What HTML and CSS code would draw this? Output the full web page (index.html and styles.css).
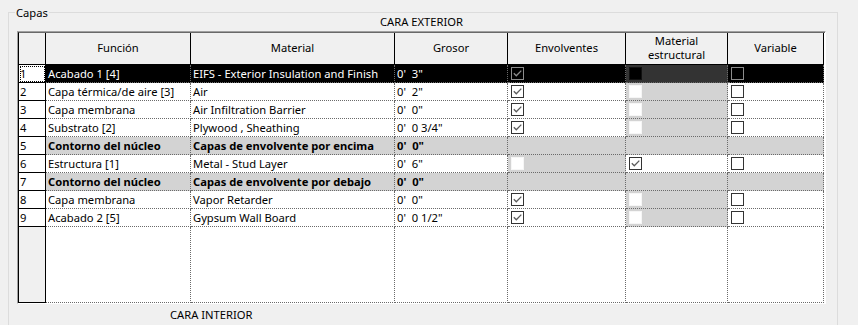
FILE: index.html
```html
<!DOCTYPE html>
<html lang="es">
<head>
<meta charset="utf-8">
<title>Capas</title>
<link rel="stylesheet" href="styles.css">
</head>
<body>
<div class="group">
  <span class="legend">Capas</span>
  <div class="caption cap-top">CARA EXTERIOR</div>
  <div class="frame">
    <div class="grid">
      <div class="hd"></div>
      <div class="hd">Función</div>
      <div class="hd">Material</div>
      <div class="hd">Grosor</div>
      <div class="hd">Envolventes</div>
      <div class="hd">Material<br>estructural</div>
      <div class="hd">Variable</div>

      <div class="rh focus">1</div>
      <div class="c sel">Acabado 1 [4]</div>
      <div class="c sel">EIFS - Exterior Insulation and Finish</div>
      <div class="c sel">0'&nbsp; 3"</div>
      <div class="c sel cbc"><span class="cb cb-sel"><svg class="chk" viewBox="0 0 11 11"><polyline points="1.8,5.2 4.3,7.8 9.3,2.6"/></svg></span></div>
      <div class="c selg cbc"><span class="cb cb-dark"></span></div>
      <div class="c sel cbc"><span class="cb cb-sel"></span></div>

      <div class="rh">2</div>
      <div class="c">Capa térmica/de aire [3]</div>
      <div class="c">Air</div>
      <div class="c">0'&nbsp; 2"</div>
      <div class="c cbc"><span class="cb"><svg class="chk" viewBox="0 0 11 11"><polyline points="1.8,5.2 4.3,7.8 9.3,2.6"/></svg></span></div>
      <div class="c g cbc"><span class="cb cb-dis"></span></div>
      <div class="c cbc"><span class="cb"></span></div>

      <div class="rh">3</div>
      <div class="c">Capa membrana</div>
      <div class="c">Air Infiltration Barrier</div>
      <div class="c">0'&nbsp; 0"</div>
      <div class="c cbc"><span class="cb"><svg class="chk" viewBox="0 0 11 11"><polyline points="1.8,5.2 4.3,7.8 9.3,2.6"/></svg></span></div>
      <div class="c g cbc"><span class="cb cb-dis"></span></div>
      <div class="c cbc"><span class="cb"></span></div>

      <div class="rh">4</div>
      <div class="c">Substrato [2]</div>
      <div class="c">Plywood , Sheathing</div>
      <div class="c">0'&nbsp; 0 3/4"</div>
      <div class="c cbc"><span class="cb"><svg class="chk" viewBox="0 0 11 11"><polyline points="1.8,5.2 4.3,7.8 9.3,2.6"/></svg></span></div>
      <div class="c g cbc"><span class="cb cb-dis"></span></div>
      <div class="c cbc"><span class="cb"></span></div>

      <div class="rh">5</div>
      <div class="c g b">Contorno del núcleo</div>
      <div class="c g b">Capas de envolvente por encima</div>
      <div class="c g b">0'&nbsp; 0"</div>
      <div class="c g"></div>
      <div class="c g"></div>
      <div class="c g"></div>

      <div class="rh">6</div>
      <div class="c">Estructura [1]</div>
      <div class="c">Metal - Stud Layer</div>
      <div class="c">0'&nbsp; 6"</div>
      <div class="c g cbc"><span class="cb cb-dis"></span></div>
      <div class="c cbc"><span class="cb"><svg class="chk" viewBox="0 0 11 11"><polyline points="1.8,5.2 4.3,7.8 9.3,2.6"/></svg></span></div>
      <div class="c cbc"><span class="cb"></span></div>

      <div class="rh">7</div>
      <div class="c g b">Contorno del núcleo</div>
      <div class="c g b">Capas de envolvente por debajo</div>
      <div class="c g b">0'&nbsp; 0"</div>
      <div class="c g"></div>
      <div class="c g"></div>
      <div class="c g"></div>

      <div class="rh">8</div>
      <div class="c">Capa membrana</div>
      <div class="c">Vapor Retarder</div>
      <div class="c">0'&nbsp; 0"</div>
      <div class="c cbc"><span class="cb"><svg class="chk" viewBox="0 0 11 11"><polyline points="1.8,5.2 4.3,7.8 9.3,2.6"/></svg></span></div>
      <div class="c g cbc"><span class="cb cb-dis"></span></div>
      <div class="c cbc"><span class="cb"></span></div>

      <div class="rh">9</div>
      <div class="c">Acabado 2 [5]</div>
      <div class="c">Gypsum Wall Board</div>
      <div class="c">0'&nbsp; 0 1/2"</div>
      <div class="c cbc"><span class="cb"><svg class="chk" viewBox="0 0 11 11"><polyline points="1.8,5.2 4.3,7.8 9.3,2.6"/></svg></span></div>
      <div class="c g cbc"><span class="cb cb-dis"></span></div>
      <div class="c cbc"><span class="cb"></span></div>

      <div class="rh fill"></div>
      <div class="c"></div>
      <div class="c"></div>
      <div class="c"></div>
      <div class="c"></div>
      <div class="c"></div>
      <div class="c"></div>
    </div>
  </div>
  <div class="caption cap-bottom">CARA INTERIOR</div>
</div>
</body>
</html>
```
FILE: styles.css
```css
* {
  box-sizing: border-box;
}

html,
body {
  margin: 0;
  height: 100%;
}

body {
  background: #f0f0f0;
  font-family: "Noto Sans", "Liberation Sans", sans-serif;
  font-size: 11.2px;
  color: #000;
  overflow: hidden;
  padding: 12px 0 0 8px;
}

.group {
  position: relative;
  width: 830px;
  height: 318px;
  border: 1px solid #dcdcdc;
  padding: 1px 11px 0 8px;
}

.legend {
  position: absolute;
  left: 6px;
  top: -8px;
  padding: 0 1px;
  background: #f0f0f0;
  line-height: 16px;
}

.caption {
  line-height: 16px;
  white-space: nowrap;
}

.cap-top {
  text-align: center;
  margin-bottom: 1px;
}

.cap-bottom {
  margin: 3px 0 0 153px;
}

.frame {
  border: 1px solid;
  border-color: #a0a0a0 #ffffff #ffffff #a0a0a0;
  background: #ffffff;
}

.grid {
  display: grid;
  grid-template-columns: 27px 145px 204px 113px 118px 102px 96px;
  grid-template-rows: 32px repeat(9, 18px) 76px;
  border-top: 1px solid #696969;
  border-left: 1px solid #000;
}

.hd {
  background: #f0f0f0;
  border-right: 1px solid #000;
  border-bottom: 1px solid #000;
  display: flex;
  align-items: center;
  justify-content: center;
  text-align: center;
  line-height: 14px;
  padding-bottom: 1px;
}

.rh {
  background: #fff;
  border-right: 1px solid #000;
  border-bottom: 1px solid #000;
  padding-left: 1px;
  line-height: 17px;
}

.rh.focus {
  outline: 1px dotted #000;
  outline-offset: -2px;
}

.rh.fill {
  background: #f0f0f0;
}

.c {
  background: #fff;
  border-right: 1px dotted #6a6a6a;
  border-bottom: 1px dotted #6a6a6a;
  padding-left: 2px;
  line-height: 17px;
  white-space: nowrap;
  overflow: hidden;
}

.c.g {
  background: #d3d3d3;
}

.c.b {
  font-weight: bold;
}

.c.sel {
  background: #000;
  color: #fff;
}

.c.selg {
  background: #333;
}

.c.cbc {
  padding: 2px 0 0 3px;
}

.cb {
  display: block;
  width: 13px;
  height: 13px;
  border: 1px solid #333;
  background: #fff;
}

.cb.cb-dis {
  border-color: #f6f6f6;
  background: #fff;
}

.cb.cb-sel {
  border-color: #8c8c8c;
  background: #000;
}

.cb.cb-dark {
  border-color: #111;
  background: #000;
}

.chk {
  display: block;
  width: 11px;
  height: 11px;
  fill: none;
  stroke: #5c5c5c;
  stroke-width: 1.3;
}

.cb-sel .chk {
  stroke: #8c8c8c;
}
```
